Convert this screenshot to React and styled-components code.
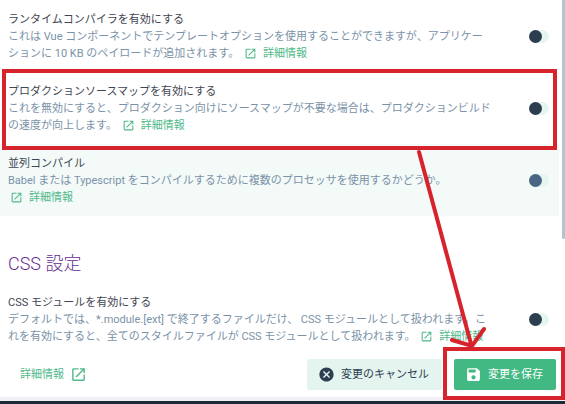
import React, { useState } from 'react'
import styled, { createGlobalStyle } from 'styled-components'
import { MdCancel, MdOpenInNew, MdSave } from 'react-icons/md'

const runtimeText = (
    <>
        これは Vue コンポーネントでテンプレートオプションを使用することができますが、アプリケー<br />
        ションに 10 KB のペイロードが追加されます。
    </>
)

const sourceMapText = (
    <>
        これを無効にすると、プロダクション向けにソースマップが不要な場合は、プロダクションビルド<br />
        の速度が向上します。
    </>
)

const parallelText = (
    <>
        Babel または Typescript をコンパイルするために複数のプロセッサを使用するかどうか。<br />
    </>
)

const cssModulesText = (
    <>
        デフォルトでは、*.module.[ext] で終了するファイルだけ、 CSS モジュールとして扱われます。こ<br />
        れを有効にすると、全てのスタイルファイルが CSS モジュールとして扱われます。
    </>
)

const Setting = ({ id, title, text, active }) => {
    const [on, setOn] = useState(false);

    return (
        <SettingRow $active={active}>
            <SettingText>
                <Title htmlFor={id}>{title}</Title>
                <Description>
                    {text}{' '}
                    <MoreLink href="#">
                        <MdOpenInNew size={13} />
                        詳細情報
                    </MoreLink>
                </Description>
            </SettingText>
            <Switch
                id={id}
                type="checkbox"
                $active={active}
                checked={on}
                onChange={() => setOn(!on)}
            />
        </SettingRow>
    )
}

const App = () => {
    return (
        <>
            <GlobalStyle />
            <Page>
                <Scroller>
                    <Settings>
                        <Setting id="runtime" title="ランタイムコンパイラを有効にする" text={runtimeText} />
                        <Setting id="sourcemap" title="プロダクションソースマップを有効にする" text={sourceMapText} />
                        <Setting id="parallel" title="並列コンパイル" text={parallelText} active />
                        <Heading>CSS 設定</Heading>
                        <Setting id="cssmodules" title="CSS モジュールを有効にする" text={cssModulesText} />
                    </Settings>
                    <ScrollThumb />
                </Scroller>
                <ActionsBar>
                    <DocsLink href="#">
                        詳細情報
                        <MdOpenInNew size={17} />
                    </DocsLink>
                    <Actions>
                        <Button>
                            <MdCancel size={17} />
                            変更のキャンセル
                        </Button>
                        <Button $primary>
                            <MdSave size={17} />
                            変更を保存
                        </Button>
                    </Actions>
                </ActionsBar>
                <StatusBar />

                <RowMark />
                <SaveMark />
                <Arrow width="80" height="204" viewBox="0 0 80 204">
                    <path d="M14 5 L66 197 M47 193 L67 199 L79 182" />
                </Arrow>
            </Page>
        </>
    )
}

export default App

const GlobalStyle = createGlobalStyle`
* {
    box-sizing: border-box;
}
body {
    margin: 0;
    background: #fff;
    font-family: Roboto, "Noto Sans CJK JP", sans-serif;
    font-size: 11px;
    font-weight: 400;
    line-height: 17px;
}
`

const Page = styled.main`
    position: relative;
    overflow: hidden;
`

const Scroller = styled.div`
    display: flex;
    gap: 3px;
`

const Settings = styled.div`
    flex: 1;
    min-width: 0;
`

const ScrollThumb = styled.div`
    width: 3px;
    height: 239px;
    border-radius: 0 0 2px 2px;
    background: #b1c5d1;
`

const SettingRow = styled.section`
    display: flex;
    align-items: center;
    justify-content: space-between;
    gap: 12px;
    padding: 11px 10px 10px 8px;
    background: ${(props) => (props.$active ? '#f3faf8' : '#fff')};
`

const SettingText = styled.div`
    white-space: nowrap;
`

const Title = styled.label`
    display: block;
    color: #3f4653;
`

const Description = styled.div`
    color: #7a92a8;
`

const MoreLink = styled.a`
    display: inline-flex;
    align-items: center;
    gap: 6px;
    margin-left: 2px;
    color: #4fb98a;
    text-decoration: none;
    vertical-align: top;
`

const Switch = styled.input`
    appearance: none;
    flex: none;
    display: flex;
    width: 20px;
    height: 13px;
    margin: 0;
    border-radius: 7px;
    background: #e5f5f0;
    cursor: pointer;

    &::before {
        content: '';
        width: 13px;
        height: 13px;
        border-radius: 50%;
        background: ${(props) => (props.$active ? '#486586' : '#2c3e50')};
    }
    &:checked {
        justify-content: flex-end;
    }
`

const Heading = styled.h2`
    margin: 0;
    padding: 36px 8px 7px;
    color: #652b91;
    font-size: 18px;
    font-weight: 300;
    line-height: 24px;
`

const ActionsBar = styled.footer`
    display: flex;
    align-items: center;
    justify-content: space-between;
    padding: 4px 9px 7px 20px;
`

const DocsLink = styled.a`
    display: flex;
    align-items: center;
    gap: 6px;
    color: #4fb98a;
    text-decoration: none;
`

const Actions = styled.div`
    display: flex;
    gap: 12px;
`

const Button = styled.button`
    display: flex;
    align-items: center;
    gap: 6px;
    height: 31px;
    padding: 0 13px 0 11px;
    border: none;
    border-radius: 2px;
    background: ${(props) => (props.$primary ? '#42b983' : '#e4f4ee')};
    color: ${(props) => (props.$primary ? '#fff' : '#2c3e50')};
    font: inherit;
    cursor: pointer;
`

const StatusBar = styled.div`
    height: 7px;
    border-top: 4px solid #f1f1f5;
    background: #1d2935;
`

/* red marks drawn over the page */
const Mark = styled.div`
    position: absolute;
    border: 4px solid #d7232b;
    pointer-events: none;
`

const RowMark = styled(Mark)`
    top: 69px;
    left: 2px;
    right: 8px;
    height: 81px;
`

const SaveMark = styled(Mark)`
    bottom: 4px;
    right: 0;
    width: 122px;
    height: 53px;
`

const Arrow = styled.svg`
    position: absolute;
    top: 147px;
    right: 80px;
    overflow: visible;
    fill: none;
    stroke: #d7232b;
    stroke-width: 4;
    stroke-linecap: round;
    pointer-events: none;
`
